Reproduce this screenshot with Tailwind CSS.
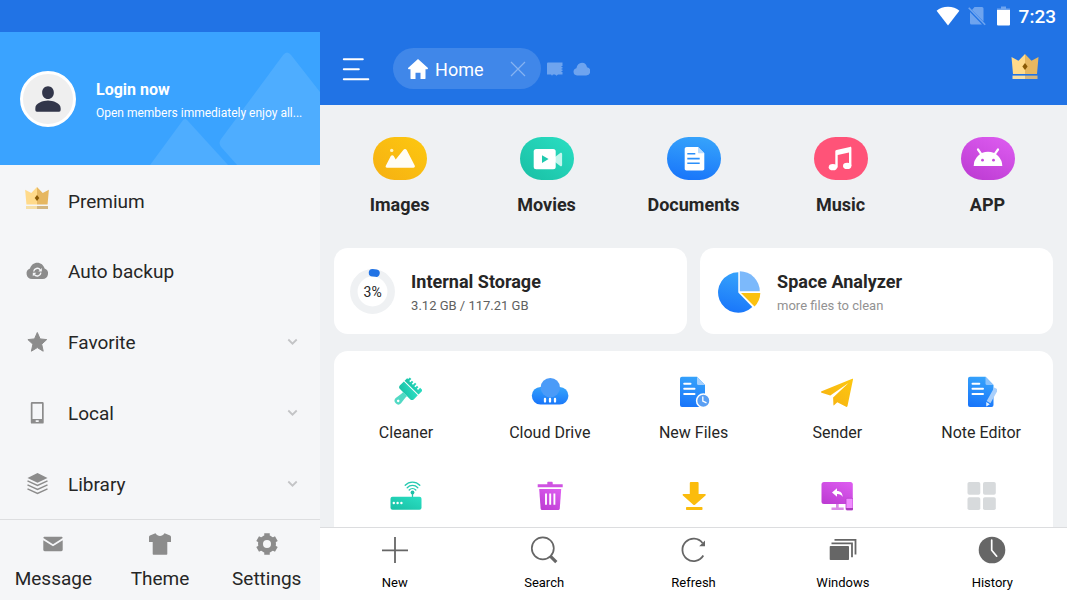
<!DOCTYPE html>
<html lang="en">
<head>
    <meta charset="UTF-8">
    <meta name="viewport" content="width=device-width, initial-scale=1.0">
    <title>File Explorer</title>

    <script src="https://cdn.jsdelivr.net/npm/@tailwindcss/browser@4"></script>
    <style>
        body {
            font-family: Roboto, "Noto Sans", "Liberation Sans", sans-serif;
        }
    </style>
</head>
<body class="h-screen flex flex-col overflow-hidden bg-[#eff1f3] text-[#262626]">

    <!-- Shared gradients and the crown symbol -->
    <svg class="absolute w-0 h-0" aria-hidden="true">
        <defs>
            <linearGradient id="blue" x1="0.6" y1="0" x2="0.4" y2="1"><stop offset="0" stop-color="#36a3fb" /><stop offset="1" stop-color="#1976fa" /></linearGradient>
            <linearGradient id="teal" x1="1" y1="0" x2="0" y2="1"><stop offset="0" stop-color="#2adfc3" /><stop offset="1" stop-color="#19bfa4" /></linearGradient>
            <linearGradient id="purple" x1="0.8" y1="0" x2="0.2" y2="1"><stop offset="0" stop-color="#dc5bef" /><stop offset="1" stop-color="#bd3cd3" /></linearGradient>
            <linearGradient id="amber" x1="1" y1="0" x2="0" y2="1"><stop offset="0" stop-color="#fdc810" /><stop offset="1" stop-color="#f6b012" /></linearGradient>
            <symbol id="crown" viewBox="0 0 27 25">
                <path fill="#ffda8a" d="M0 3l7 3.8L13.5 0v20h-12z" />
                <path fill="#e6b761" d="M27 3l-7 3.8L13.5 0v20h12z" />
                <path fill="#8a5a06" d="M13.5 9l2.6 3.5-2.6 3.5-2.6-3.5z" />
                <path fill="#f6dfa6" d="M1 21.6h12.5V25H1z" />
                <path fill="#d3b680" d="M13.5 21.6H26V25H13.5z" />
            </symbol>
        </defs>
    </svg>

    <!-- Status bar -->
    <div class="h-8 shrink-0 bg-[#2173e5] flex items-center justify-end pr-[11px] text-white">
        <svg class="w-6 h-5 mr-2" viewBox="0 0 24 20" fill="currentColor"><path d="M12 19.500L.6 4.800C3.600 2.200 7.500 .8 12 .8s8.400 1.400 11.400 4z" /></svg>
        <svg class="w-[18px] h-5 mr-[11px]" viewBox="0 0 18 20" fill="none">
            <path fill="#6ea4ef" d="M6.500 1H14a1.500 1.500 0 0 1 1.500 1.500v13L4 4zM2 6l12 12.500H3.500A1.500 1.500 0 0 1 2 17z" />
            <path stroke="#6ea4ef" stroke-width="1.600" d="M.7 1.700l16.500 17" />
        </svg>
        <svg class="w-[13px] h-5 mr-[9px]" viewBox="0 0 13 20">
            <path fill="#6ea4ef" d="M4 .5h5v2h4V5H0V2.500h4z" />
            <path fill="#fff" d="M0 4h13v14.500a1 1 0 0 1-1 1H1a1 1 0 0 1-1-1z" />
        </svg>
        <span class="pt-0.5 text-[19px] leading-8 font-medium">7:23</span>
    </div>

    <div class="flex-1 min-h-0 flex">

        <!-- Drawer -->
        <aside class="w-[30%] shrink-0 flex flex-col bg-[#f5f6f8]">
            <a href="#" class="relative h-[133px] shrink-0 bg-[#3aa3ff] flex items-center gap-5 pl-5 text-white">
                <svg class="absolute inset-0 w-full h-full" viewBox="0 0 320 133" preserveAspectRatio="none" fill="#4eadff" aria-hidden="true">
                    <path d="M283 23q4-5 8 0l29 37v73h-83l-16-18q-3-4 0-8z" />
                    <path d="M150 133l33-45q2-2 4 0l41 45z" />
                </svg>
                <span class="relative w-14 h-14 shrink-0 rounded-full border-[3px] border-white bg-[#efefef] flex items-center justify-center">
                    <svg class="w-[38px] h-[38px] shrink-0" viewBox="0 0 24 24" fill="#32364a"><path d="M12 12c2.100 0 3.700-1.800 3.700-4S14.100 4 12 4 8.300 5.800 8.300 8s1.600 4 3.700 4zm0 1c-3 0-8 1.700-8 4.800V19a1 1 0 0 0 1 1h14a1 1 0 0 0 1-1v-1.200C20 14.700 15 13 12 13z" /></svg>
                </span>
                <span class="relative flex flex-col pt-[5px]">
                    <span class="text-base leading-6 font-bold">Login now</span>
                    <span class="text-[12px] leading-[22px] whitespace-nowrap">Open members immediately enjoy all...</span>
                </span>
            </a>

            <nav class="flex-1 flex flex-col text-[19px]">
                <a href="#" class="flex-1 flex items-center gap-[18px] pl-6 pr-[22px]">
                    <svg class="w-[26px] h-[22px] mb-1"><use href="#crown" /></svg>
                    <span class="flex-1 pt-[3px]">Premium</span>
                </a>
                <a href="#" class="flex-1 flex items-center gap-[18px] pl-6 pr-[22px]">
                    <svg class="w-[26px] h-[22px]" viewBox="0 0 26 22">
                        <path fill="#8c8c8c" d="M8 19a5.500 5.500 0 0 1-2-10.600C7 5 9.800 2.700 13.300 2.700S19.600 5 20.600 8.400A5.500 5.500 0 0 1 18.600 19z" />
                        <path fill="none" stroke="#f5f6f8" stroke-width="1.400" d="M9.700 11.500a3.700 3.700 0 0 1 6.600-1.700M16.900 12.700a3.700 3.700 0 0 1-6.600 1.800" />
                        <path fill="#f5f6f8" d="M17.800 8v3.500h-3.500zM8.800 16.200v-3.500h3.500z" />
                    </svg>
                    <span class="flex-1 pt-[3px]">Auto backup</span>
                </a>
                <a href="#" class="flex-1 flex items-center gap-[18px] pl-6 pr-[22px]">
                    <svg class="w-[26px] h-[22px]" viewBox="0 0 26 22" fill="#8c8c8c" stroke="#8c8c8c" stroke-linejoin="round"><path d="M13.300 1.500l2.800 6.400 6.600.7-5 4.600 1.500 7-5.900-3.600-5.900 3.600 1.500-7-5-4.600 6.600-.7z" /></svg>
                    <span class="flex-1 pt-[3px]">Favorite</span>
                    <svg class="w-[11px] h-2" viewBox="0 0 11 8" fill="none" stroke="#c3c4c6" stroke-width="1.800"><path d="M1.300 1.500l4.200 4.200 4.200-4.200" /></svg>
                </a>
                <a href="#" class="flex-1 flex items-center gap-[18px] pl-6 pr-[22px]">
                    <svg class="w-[26px] h-[22px]" viewBox="0 0 26 22"><path fill="#8c8c8c" fill-rule="evenodd" d="M8 0h10.500a1.200 1.200 0 0 1 1.200 1.200v19.200a1.200 1.200 0 0 1-1.200 1.200H8a1.200 1.200 0 0 1-1.200-1.200V1.200A1.200 1.200 0 0 1 8 0zm.5 1.700v15.300H18V1.700zm3.200 16.600v1.700h3v-1.700z" /></svg>
                    <span class="flex-1 pt-[3px]">Local</span>
                    <svg class="w-[11px] h-2" viewBox="0 0 11 8" fill="none" stroke="#c3c4c6" stroke-width="1.800"><path d="M1.300 1.500l4.200 4.200 4.200-4.200" /></svg>
                </a>
                <a href="#" class="flex-1 flex items-center gap-[18px] pl-6 pr-[22px]">
                    <svg class="w-[26px] h-[22px]" viewBox="0 0 26 22">
                        <path fill="#8c8c8c" d="M13.500 0l10 5-10 4.700-10-4.700z" />
                        <path fill="none" stroke="#8c8c8c" stroke-width="1.400" d="M3.500 7.800l10 4.700 10-4.700M3.500 11.800l10 4.700 10-4.700M3.500 15.800l10 4.700 10-4.700" />
                    </svg>
                    <span class="flex-1 pt-[3px]">Library</span>
                    <svg class="w-[11px] h-2" viewBox="0 0 11 8" fill="none" stroke="#c3c4c6" stroke-width="1.800"><path d="M1.300 1.500l4.200 4.200 4.200-4.200" /></svg>
                </a>
            </nav>

            <div class="shrink-0 grid grid-cols-3 border-t border-[#dddee0] text-[19px]">
                <button class="flex flex-col items-center pt-3 pb-[7px]">
                    <svg class="w-6 h-6" viewBox="0 0 24 24" fill="#8c8c8c">
                        <path d="M3.700 4.700h16.600c.8 0 1.400.6 1.400 1.400L12 12.300 2.300 6.100c0-.8.6-1.400 1.400-1.400z" />
                        <path d="M2.300 8.200l9.700 6 9.700-6v9.600c0 .8-.6 1.400-1.400 1.400H3.700c-.8 0-1.400-.6-1.400-1.400z" />
                    </svg>
                    <span class="mt-[9px] leading-7">Message</span>
                </button>
                <button class="flex flex-col items-center pt-3 pb-[7px]">
                    <svg class="w-6 h-6" viewBox="0 0 24 24" fill="#8c8c8c"><path d="M7.500 1.300c1.200 2 2.700 2.700 4.500 2.700s3.300-.7 4.500-2.700l5 1.900c.9.400 1.500 1 1.500 1.900V10h-3.700v12c0 .5-.3.800-.8.800h-13c-.5 0-.8-.3-.8-.8V10H1V5.100c0-.9.6-1.500 1.500-1.900z" /></svg>
                    <span class="mt-[9px] leading-7">Theme</span>
                </button>
                <button class="flex flex-col items-center pt-3 pb-[7px]">
                    <svg class="w-6 h-6" viewBox="0 0 24 24" fill="none" stroke="#8c8c8c">
                        <circle cx="12" cy="12" r="6.500" stroke-width="5" />
                        <path stroke-width="5.500" d="M12 1.200v3.300M12 19.500v3.300M2.650 6.600l2.900 1.650M18.450 15.750l2.900 1.650M2.650 17.400l2.900-1.650M18.450 8.250l2.900-1.650" />
                    </svg>
                    <span class="mt-[9px] leading-7">Settings</span>
                </button>
            </div>
        </aside>

        <!-- Main column -->
        <div class="flex-1 min-w-0 flex flex-col">
            <header class="h-[73px] shrink-0 bg-[#2173e5] flex items-center pl-[22px] pr-7 text-white">
                <button aria-label="Menu">
                    <svg class="w-7 h-6" viewBox="0 0 28 24" fill="none" stroke="currentColor" stroke-width="2" stroke-linecap="round"><path d="M1.800 2.200h19M1.800 12.200h15M1.800 22.200h24.500" /></svg>
                </button>
                <div class="ml-[23px] h-[41px] w-[148px] rounded-full bg-[#4087e9] flex items-center pl-[15px] pr-[15px]">
                    <a href="#" class="flex items-center gap-[7px]">
                        <svg class="w-5 h-5" viewBox="0 0 20 20" fill="currentColor"><path d="M10 0l9.700 8.800c.5.500.3 1.400-.5 1.400h-1.700v9.300c0 .3-.2.500-.5.500h-4.500v-6.300h-5V20H3c-.3 0-.5-.2-.5-.5v-9.300H.8c-.8 0-1-.9-.5-1.400z" /></svg>
                        <span class="pt-0.5 text-[18px] leading-6">Home</span>
                    </a>
                    <button class="ml-auto" aria-label="Close tab">
                        <svg class="w-4 h-4" viewBox="0 0 16 16" fill="none" stroke="#86b3f1" stroke-width="1.200"><path d="M1 1l14 14M15 1L1 15" /></svg>
                    </button>
                </div>
                <svg class="w-4 h-4 ml-1.5" viewBox="0 0 16 16" fill="#6ea4ef"><path d="M1 1.500h14.500V5h-1v1h1v1.500h-1v1h1V10h-1v1h1v2.500H11L9.500 14.700 8 13.500H6L5 14.700 4 13.500H0v-11a1 1 0 0 1 1-1z" /></svg>
                <svg class="w-[17px] h-4 ml-2.5" viewBox="0 0 17 16" fill="#6ea4ef"><path d="M4 14.500a3.700 3.700 0 0 1-.6-7.300C4 4 6 1.800 9 1.800s4.500 2 5 4.400a4.200 4.200 0 0 1-1 8.300z" /></svg>
                <a href="#" class="ml-auto pb-1" aria-label="Premium"><svg class="w-7 h-[25px] block"><use href="#crown" /></svg></a>
            </header>

            <main class="flex-1 min-h-0 overflow-hidden flex flex-col">
                <!-- File categories -->
                <nav class="shrink-0 grid grid-cols-5 px-1.5 pt-8 pb-[30px] text-[18px] font-bold">
                    <a href="#" class="flex flex-col items-center">
                        <svg class="w-[54px] h-[43px]" viewBox="0 0 54 43">
                            <rect width="54" height="43" rx="21.500" fill="url(#amber)" />
                            <path fill="#fffdf5" d="M14 30.800c-1.100 0-1.700-1-1.200-2l5-9.700c.7-1.300 2.200-1.300 2.900 0l2 3.400L30.300 13c.8-1.400 2.600-1.400 3.400 0l8 15.500c.6 1.200-.1 2.300-1.300 2.300z" />
                            <circle cx="18.700" cy="13.400" r="1.700" fill="#fff3c4" />
                        </svg>
                        <span class="mt-3 leading-[26px]">Images</span>
                    </a>
                    <a href="#" class="flex flex-col items-center">
                        <svg class="w-[54px] h-[43px]" viewBox="0 0 54 43">
                            <rect width="54" height="43" rx="21.500" fill="url(#teal)" />
                            <path fill="#c3f6ed" d="M35 20l5.200-4c.8-.6 1.900 0 1.900 1v11c0 1-1.100 1.600-1.900 1L35 25z" />
                            <rect x="13.700" y="12" width="22" height="20.300" rx="2.500" fill="#fff" />
                            <path fill="#1fc9ae" d="M22 18.300l6.600 3.800-6.600 3.800z" />
                        </svg>
                        <span class="mt-3 leading-[26px]">Movies</span>
                    </a>
                    <a href="#" class="flex flex-col items-center">
                        <svg class="w-[54px] h-[43px]" viewBox="0 0 54 43">
                            <rect width="54" height="43" rx="21.500" fill="url(#blue)" />
                            <path fill="#fff" d="M19.700 10H31l6.300 6.300v15.500c0 1-.7 1.700-1.700 1.700H19.400c-1 0-1.700-.7-1.700-1.700V12c0-1.200.8-2 2-2z" />
                            <path fill="#b9dcff" d="M31 10l6.300 6.300H32c-.6 0-1-.4-1-1z" />
                            <path fill="none" stroke="#2b8ffa" stroke-width="1.600" d="M20.300 16.800h8M20.300 21.600h12.400M20.300 26.300h12.400" />
                        </svg>
                        <span class="mt-3 leading-[26px]">Documents</span>
                    </a>
                    <a href="#" class="flex flex-col items-center">
                        <svg class="w-[54px] h-[43px]" viewBox="0 0 54 43">
                            <rect width="54" height="43" rx="21.500" fill="#ff5378" />
                            <path fill="#fff" d="M21.300 14.500c0-.8.400-1.400 1.200-1.600l13.400-3c.8-.2 1.500.3 1.500 1.200V29h-2.400V15.500l-11.300 2.600V30.500h-2.400z" />
                            <ellipse cx="18.900" cy="30.200" rx="4.200" ry="3.100" fill="#fff" />
                            <ellipse cx="33.200" cy="28.900" rx="4.200" ry="3.100" fill="#fff" />
                        </svg>
                        <span class="mt-3 leading-[26px]">Music</span>
                    </a>
                    <a href="#" class="flex flex-col items-center">
                        <svg class="w-[54px] h-[43px]" viewBox="0 0 54 43">
                            <rect width="54" height="43" rx="21.500" fill="url(#purple)" />
                            <path fill="#fff" d="M12.700 29a14.300 14.300 0 0 1 28.600 0z" />
                            <path fill="none" stroke="#fff" stroke-width="2.200" stroke-linecap="round" d="M17 12.500l3.600 5.200M37 12.500l-3.600 5.200" />
                            <circle cx="21.500" cy="23.200" r="1.400" fill="#c547db" />
                            <circle cx="32.500" cy="23.200" r="1.400" fill="#c547db" />
                        </svg>
                        <span class="mt-3 leading-[26px]">APP</span>
                    </a>
                </nav>

                <!-- Storage cards -->
                <section class="shrink-0 grid grid-cols-2 gap-[13px] px-3.5">
                    <a href="#" class="h-[86px] rounded-[14px] bg-white flex items-center gap-4 pl-4">
                        <span class="grid place-items-center">
                            <svg class="col-start-1 row-start-1 w-[45px] h-[45px]" viewBox="0 0 45 45" fill="none">
                                <circle cx="22.500" cy="22.500" r="18.700" stroke="#eff1f3" stroke-width="7.500" />
                                <path stroke="#2173e5" stroke-width="7.500" stroke-linecap="round" d="M22.500 3.800a18.700 18.700 0 0 1 3.500.3" />
                            </svg>
                            <span class="col-start-1 row-start-1 pt-0.5 text-sm">3%</span>
                        </span>
                        <span class="flex flex-col pt-1.5">
                            <span class="text-[18px] leading-6 font-bold">Internal Storage</span>
                            <span class="text-[13px] leading-6 text-[#606060]">3.12 GB / 117.21 GB</span>
                        </span>
                    </a>
                    <a href="#" class="h-[86px] rounded-[14px] bg-white flex items-center gap-4 pl-4">
                        <svg class="w-[45px] h-[45px]" viewBox="0 0 45 45">
                            <path fill="url(#blue)" d="M22.300 3.300v20.200l14 14.500A20.200 20.200 0 1 1 22.300 3.300z" />
                            <path fill="#7cb9fb" d="M23.800 2.300a20 20 0 0 1 20 20h-20z" />
                            <path fill="#fbc110" d="M25 24h19.300a19.500 19.500 0 0 1-5.800 13.500z" />
                        </svg>
                        <span class="flex flex-col pt-1.5">
                            <span class="text-[18px] leading-6 font-bold">Space Analyzer</span>
                            <span class="text-[13px] leading-6 text-[#929292]">more files to clean</span>
                        </span>
                    </a>
                </section>

                <!-- Tools -->
                <section class="flex-1 mt-[17px] mx-3.5 rounded-t-[14px] bg-white grid grid-cols-5 content-start gap-y-[35px] pt-[25px] text-base">
                    <a href="#" class="flex flex-col items-center">
                        <svg class="w-8 h-8" viewBox="0 0 32 32">
                            <g transform="rotate(45 16 16) translate(-1 3)">
                                <path fill="url(#teal)" d="M8 3.500c0-.8.6-1.400 1.400-1.400V0h2.200v3h1.600V.8h2V3h1.600V0h2V3h1.600V.8h2V3H24V0h2c1 0 1.700.7 1.700 1.600V6H8z" />
                                <path fill="url(#teal)" d="M8 7h19.700v5.500c0 1.700-1 2.700-2.700 2.700H10.700c-1.700 0-2.700-1-2.700-2.700z" />
                                <path fill="#52d9c4" fill-rule="evenodd" d="M15 15h5.500v2.500l1 7a3.700 3.700 0 0 1-7.500 0l1-7zm2.700 8.500a1.300 1.300 0 1 0 .1 0z" />
                            </g>
                        </svg>
                        <span class="mt-[13px] leading-6">Cleaner</span>
                    </a>
                    <a href="#" class="flex flex-col items-center">
                        <svg class="w-[38px] h-8" viewBox="0 0 38 32">
                            <rect x=".8" y="11" width="36.600" height="17.500" rx="8.700" fill="url(#blue)" />
                            <circle cx="19.300" cy="11.700" r="9.700" fill="#4b9bf8" />
                            <path fill="none" stroke="#fff" stroke-width="2.300" stroke-linecap="round" d="M14 23v2.600M19 23v2.600M24 23v2.600" />
                        </svg>
                        <span class="mt-[13px] leading-6">Cloud Drive</span>
                    </a>
                    <a href="#" class="flex flex-col items-center">
                        <svg class="w-8 h-8" viewBox="0 0 32 32">
                            <path fill="url(#blue)" d="M4 .8h15l8 8.200v20a2 2 0 0 1-2 2H4a2 2 0 0 1-2-2V2.800a2 2 0 0 1 2-2z" />
                            <path fill="#a5d0fd" d="M19 .8L27 9h-6.500A1.500 1.500 0 0 1 19 7.500z" />
                            <path fill="none" stroke="#fff" stroke-width="2" stroke-linecap="round" d="M6.200 7.700h6.300M6.200 12.800h10.300M6.200 18h10.300" />
                            <circle cx="25.300" cy="24.700" r="6.700" fill="#5a9ff3" stroke="#fff" stroke-width="1.500" />
                            <path fill="none" stroke="#fff" stroke-width="1.300" stroke-linecap="round" d="M24.800 21v4.200l3.200 1.500" />
                        </svg>
                        <span class="mt-[13px] leading-6">New Files</span>
                    </a>
                    <a href="#" class="flex flex-col items-center">
                        <svg class="w-8 h-8" viewBox="0 0 32 32" fill="url(#amber)">
                            <path d="M31.300 2.800c.5-.2.900.2.700.8l-5.500 26.500c-.1.700-.8 1-1.400.6l-8.800-4.500-3 2.900c-.5.500-.9.300-.9-.4l-.3-7.200L27.500 7 9.300 19.500.6 16.800c-.8-.3-.8-1.100 0-1.500z" />
                        </svg>
                        <span class="mt-[13px] leading-6">Sender</span>
                    </a>
                    <a href="#" class="flex flex-col items-center">
                        <svg class="w-8 h-8" viewBox="0 0 32 32">
                            <path fill="url(#blue)" d="M5 .8h15.500l8 8.200v20a2 2 0 0 1-2 2H5a2 2 0 0 1-2-2V2.800a2 2 0 0 1 2-2z" />
                            <path fill="#8cc3fc" d="M20.500 .8l8 8.200H22a1.500 1.500 0 0 1-1.500-1.500z" />
                            <path fill="none" stroke="#fff" stroke-width="2" stroke-linecap="round" d="M7.500 7.700h6.800M7.500 12.800h10.500M7.500 18h10.500" />
                            <path fill="#a9cffb" d="M29.300 11.500l3.700 2.200-7.600 13.600-3.700-2.200z" />
                            <path fill="#e6f2ff" d="M21.200 26l3.600 2.200-3.500 2.300z" />
                        </svg>
                        <span class="mt-[13px] leading-6">Note Editor</span>
                    </a>

                    <a href="#" class="flex flex-col items-center" aria-label="View on PC">
                        <svg class="w-8 h-8" viewBox="0 0 32 32">
                            <rect x=".5" y="16.700" width="31" height="13" rx="2" fill="url(#teal)" />
                            <path fill="none" stroke="#25c9b0" stroke-width="1.300" stroke-linecap="round" d="M22.500 12.500v4M15.200 5.300a10 10 0 0 1 14.600 0M17.200 7.700a7.400 7.400 0 0 1 10.600 0M19.200 10a4.700 4.700 0 0 1 6.600 0" />
                            <circle cx="22.500" cy="12.500" r="1.900" fill="#1fbfa6" />
                            <g fill="#fff"><circle cx="3.800" cy="23" r="1.200" /><circle cx="7.600" cy="23" r="1.200" /><circle cx="11.400" cy="23" r="1.200" /></g>
                        </svg>
                    </a>
                    <a href="#" class="flex flex-col items-center" aria-label="Recycle Bin">
                        <svg class="w-8 h-8" viewBox="0 0 32 32">
                            <path fill="#cf53e2" d="M13.300 4.300V2.700c0-.6.400-1 1-1h3.400c.6 0 1 .4 1 1v1.600h10v3h-25v-3z" />
                            <path fill="url(#purple)" d="M5.200 9h22l-1.400 19.200c-.1 1.200-.8 1.900-2 1.900H8.600c-1.200 0-1.900-.7-2-1.900z" />
                            <path fill="none" stroke="#fff" stroke-width="1.900" d="M12 13.500v11.300M16.200 13.500v11.300M20.400 13.500v11.300" />
                        </svg>
                    </a>
                    <a href="#" class="flex flex-col items-center" aria-label="Downloader">
                        <svg class="w-8 h-8" viewBox="0 0 32 32" fill="#fbbc0d">
                            <path d="M12.700 2h7c.5 0 .9.400.9.900V14H27c.8 0 1.100.8.500 1.400L17 24.700c-.5.500-1.200.5-1.700 0L4.900 15.400c-.6-.6-.3-1.400.5-1.400h6.400V2.900c0-.5.400-.9.900-.9z" />
                            <rect x="8" y="27" width="16.500" height="3" rx=".7" />
                        </svg>
                    </a>
                    <a href="#" class="flex flex-col items-center" aria-label="Screen Cast">
                        <svg class="w-8 h-8" viewBox="0 0 32 32">
                            <rect x=".5" y="2" width="31.300" height="22" rx="2.500" fill="url(#purple)" />
                            <path fill="#d98ae6" d="M15 24h2.700v3.500h5V30H10.500v-2.500H15z" />
                            <path fill="#fff" d="M11 12.500l5-4.200v2.600c3.500 0 5.600 2 5.700 6-1.300-2.200-3-3-5.700-2.900v2.700z" />
                            <rect x="25" y="18.300" width="7" height="11.700" rx="1" fill="#f08bff" stroke="#b83fcb" stroke-width=".8" />
                            <path fill="#a93abb" d="M25 28h7v1a1 1 0 0 1-1 1h-5a1 1 0 0 1-1-1z" />
                        </svg>
                    </a>
                    <a href="#" class="flex flex-col items-center" aria-label="More tools">
                        <svg class="w-8 h-8" viewBox="0 0 32 32" fill="#d7dadc">
                            <rect x="2.500" y="2" width="12.800" height="12.800" rx="1.800" /><rect x="18" y="2" width="12.800" height="12.800" rx="1.800" />
                            <rect x="2.500" y="17.200" width="12.800" height="12.800" rx="1.800" /><rect x="18" y="17.200" width="12.800" height="12.800" rx="1.800" />
                        </svg>
                    </a>
                </section>
            </main>

            <!-- Bottom toolbar -->
            <footer class="shrink-0 grid grid-cols-5 bg-white border-t border-[#dcdddf] text-[13px] text-black">
                <button class="flex flex-col items-center pt-2 pb-[7px]">
                    <svg class="w-7 h-7" viewBox="0 0 28 28" fill="none" stroke="#666" stroke-width="1.800"><path d="M14 1v26M1 14.300h26" /></svg>
                    <span class="mt-[9px] leading-5">New</span>
                </button>
                <button class="flex flex-col items-center pt-2 pb-[7px]">
                    <svg class="w-7 h-7" viewBox="0 0 28 28" fill="none" stroke="#666"><circle cx="12.800" cy="12.300" r="11" stroke-width="1.700" /><path stroke-width="3.200" d="M20.300 20.200l6 6" /></svg>
                    <span class="mt-[9px] leading-5">Search</span>
                </button>
                <button class="flex flex-col items-center pt-2 pb-[7px]">
                    <svg class="w-7 h-7" viewBox="0 0 28 28"><path fill="none" stroke="#666" stroke-width="1.800" d="M23.300 19.500A11.200 11.200 0 1 1 22.500 7" /><path fill="#666" d="M25 4.500v5.700h-5.800z" /></svg>
                    <span class="mt-[9px] leading-5">Refresh</span>
                </button>
                <button class="flex flex-col items-center pt-2 pb-[7px]">
                    <svg class="w-7 h-7" viewBox="0 0 28 28"><rect x=".7" y="10" width="19.300" height="14" rx=".8" fill="#666" /><path fill="none" stroke="#666" stroke-width="1.800" d="M2.500 7.300h20.500v14M5.500 3.800h21v14.700" /></svg>
                    <span class="mt-[9px] leading-5">Windows</span>
                </button>
                <button class="flex flex-col items-center pt-2 pb-[7px]">
                    <svg class="w-7 h-7" viewBox="0 0 28 28"><circle cx="14" cy="14" r="13.300" fill="#666" /><path fill="none" stroke="#fff" stroke-width="1.700" stroke-linecap="round" d="M13.700 4.200v10l5 6" /></svg>
                    <span class="mt-[9px] leading-5">History</span>
                </button>
            </footer>
        </div>
    </div>
</body>
</html>
